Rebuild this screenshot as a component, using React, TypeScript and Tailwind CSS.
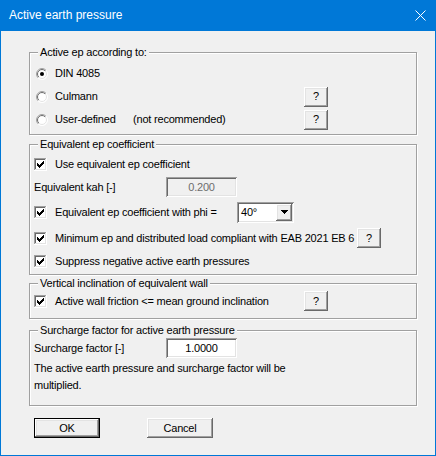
import React from "react";

const Check = () => (
  <svg width="13" height="13" viewBox="0 0 13 13" shapeRendering="crispEdges" className="shrink-0">
    <rect x="0" y="0" width="13" height="13" fill="#fff" />
    <path d="M0 0H12V1H1V12H0Z" fill="#a0a0a0" />
    <path d="M1 1H11V2H2V11H1Z" fill="#696969" />
    <path d="M12 0H13V13H0V12H12Z" fill="#fff" />
    <path d="M11 1H12V12H1V11H11Z" fill="#e3e3e3" />
    <g fill="#000">
      <rect x="9" y="3" width="1" height="1" />
      <rect x="8" y="4" width="2" height="1" />
      <rect x="3" y="5" width="1" height="1" />
      <rect x="7" y="5" width="3" height="1" />
      <rect x="3" y="6" width="2" height="1" />
      <rect x="6" y="6" width="3" height="1" />
      <rect x="3" y="7" width="5" height="1" />
      <rect x="4" y="8" width="3" height="1" />
      <rect x="5" y="9" width="1" height="1" />
    </g>
  </svg>
);

const Radio = ({ on }: { on?: boolean }) => (
  <svg width="12" height="12" viewBox="0 0 12 12" className="shrink-0">
    <defs>
      <linearGradient id="ro" x1="0" y1="0" x2="1" y2="1">
        <stop offset="0.5" stopColor="#a0a0a0" />
        <stop offset="0.5" stopColor="#ffffff" />
      </linearGradient>
      <linearGradient id="ri" x1="0" y1="0" x2="1" y2="1">
        <stop offset="0.5" stopColor="#696969" />
        <stop offset="0.5" stopColor="#e3e3e3" />
      </linearGradient>
    </defs>
    <circle cx="6" cy="6" r="5.5" fill="#fff" stroke="url(#ro)" strokeWidth="1" />
    <circle cx="6" cy="6" r="4.5" fill="#fff" stroke="url(#ri)" strokeWidth="1" />
    {on && <circle cx="6" cy="6" r="2" fill="#000" />}
  </svg>
);

const btn3d =
  "bg-[#f0f0f0] shadow-[inset_-1px_-1px_0_#696969,inset_1px_1px_0_#ffffff,inset_-2px_-2px_0_#a0a0a0,inset_2px_2px_0_#e3e3e3]";
const sunken =
  "shadow-[inset_1px_1px_0_#a0a0a0,inset_-1px_-1px_0_#ffffff,inset_2px_2px_0_#696969,inset_-2px_-2px_0_#e3e3e3]";

const QBtn = () => (
  <div className={`w-[24px] h-[20px] shrink-0 flex items-center justify-center ${btn3d}`}>?</div>
);

const Group = ({
  title,
  className,
  children,
}: {
  title: string;
  className: string;
  children: React.ReactNode;
}) => (
  <div
    className={`relative border border-[#a0a0a0] shadow-[inset_1px_1px_0_#ffffff,1px_1px_0_#ffffff] ${className}`}
  >
    <span className="absolute left-[8px] -top-[7px] bg-[#f0f0f0] px-[2px] leading-[13px] whitespace-nowrap">
      {title}
    </span>
    {children}
  </div>
);

export default function App() {
  return (
    <div className="w-[436px] h-[456px] bg-[#0078d7] px-px pb-px flex flex-col font-['Liberation_Sans',Arial,sans-serif] text-[11px] leading-[13px] text-black">
      <div className="h-[31px] shrink-0 flex items-center justify-between pl-[8px] pr-[9px] text-white text-[12px]">
        <span className="mt-[-1px]">Active earth pressure</span>
        <svg width="11" height="11" viewBox="0 0 11 11">
          <path d="M0.5 0.5L10.5 10.5M10.5 0.5L0.5 10.5" stroke="#fff" strokeWidth="1" />
        </svg>
      </div>
      <div className="flex-1 bg-[#f0f0f0] pl-[28px] pr-[18px] pt-[21px] tracking-[-0.2px]">
        <Group title="Active ep according to:" className="h-[83px] pt-[9px]">
          <div className="flex items-center h-[23px] pl-[6px]">
            <Radio on />
            <span className="ml-[7px]">DIN 4085</span>
          </div>
          <div className="flex items-center h-[23px] pl-[6px]">
            <Radio />
            <span className="ml-[7px] w-[249px]">Culmann</span>
            <QBtn />
          </div>
          <div className="flex items-center h-[23px] pl-[6px]">
            <Radio />
            <span className="ml-[7px] w-[249px] flex">
              <span className="w-[78px]">User-defined</span>
              <span>(not recommended)</span>
            </span>
            <QBtn />
          </div>
        </Group>

        <Group title="Equivalent ep coefficient" className="h-[131px] mt-[9px] pt-[8px]">
          <div className="flex items-center h-[22px] pl-[4px]">
            <Check />
            <span className="ml-[8px]">Use equivalent ep coefficient</span>
          </div>
          <div className="flex items-center h-[24px] pl-[4px]">
            <span className="w-[132px]">Equivalent kah [-]</span>
            <div
              className={`w-[71px] h-[20px] flex items-center justify-center bg-[#f0f0f0] text-[#6d6d6d] ${sunken}`}
            >
              0.200
            </div>
          </div>
          <div className="flex items-center h-[26px] pl-[4px]">
            <Check />
            <span className="ml-[8px] w-[182px]">Equivalent ep coefficient with phi =</span>
            <div className={`w-[57px] h-[21px] bg-white flex items-center pl-[4px] pr-[2px] ${sunken}`}>
              <span className="flex-1">40°</span>
              <div className={`w-[16px] h-[17px] flex items-center justify-center ${btn3d}`}>
                <svg width="7" height="4" viewBox="0 0 7 4" shapeRendering="crispEdges">
                  <path d="M0 0H7L3.5 4Z" fill="#000" />
                </svg>
              </div>
            </div>
          </div>
          <div className="flex items-center h-[26px] pl-[4px]">
            <Check />
            <span className="ml-[8px] w-[302px] whitespace-nowrap">
              Minimum ep and distributed load compliant with EAB 2021 EB 6
            </span>
            <QBtn />
          </div>
          <div className="flex items-center h-[20px] pl-[4px]">
            <Check />
            <span className="ml-[8px]">Suppress negative active earth pressures</span>
          </div>
        </Group>

        <Group title="Vertical inclination of equivalent wall" className="h-[36px] mt-[8px] pt-[7px]">
          <div className="flex items-center h-[20px] pl-[4px]">
            <Check />
            <span className="ml-[8px] w-[249px]">Active wall friction &lt;= mean ground inclination</span>
            <QBtn />
          </div>
        </Group>

        <Group title="Surcharge factor for active earth pressure" className="h-[76px] mt-[11px] pt-[7px]">
          <div className="flex items-center h-[20px] pl-[4px]">
            <span className="w-[132px]">Surcharge factor [-]</span>
            <div className={`w-[71px] h-[20px] flex items-center justify-center bg-white ${sunken}`}>
              1.0000
            </div>
          </div>
          <p className="pl-[4px] mt-[2px] leading-[17px]">
            The active earth pressure and surcharge factor will be
            <br />
            multiplied.
          </p>
        </Group>

        <div className="flex mt-[12px] pl-[5px]">
          <div className={`w-[66px] h-[20px] border border-black flex items-center justify-center ${btn3d}`}>
            OK
          </div>
          <div className={`w-[66px] h-[20px] ml-[47px] flex items-center justify-center ${btn3d}`}>
            Cancel
          </div>
        </div>
      </div>
    </div>
  );
}
